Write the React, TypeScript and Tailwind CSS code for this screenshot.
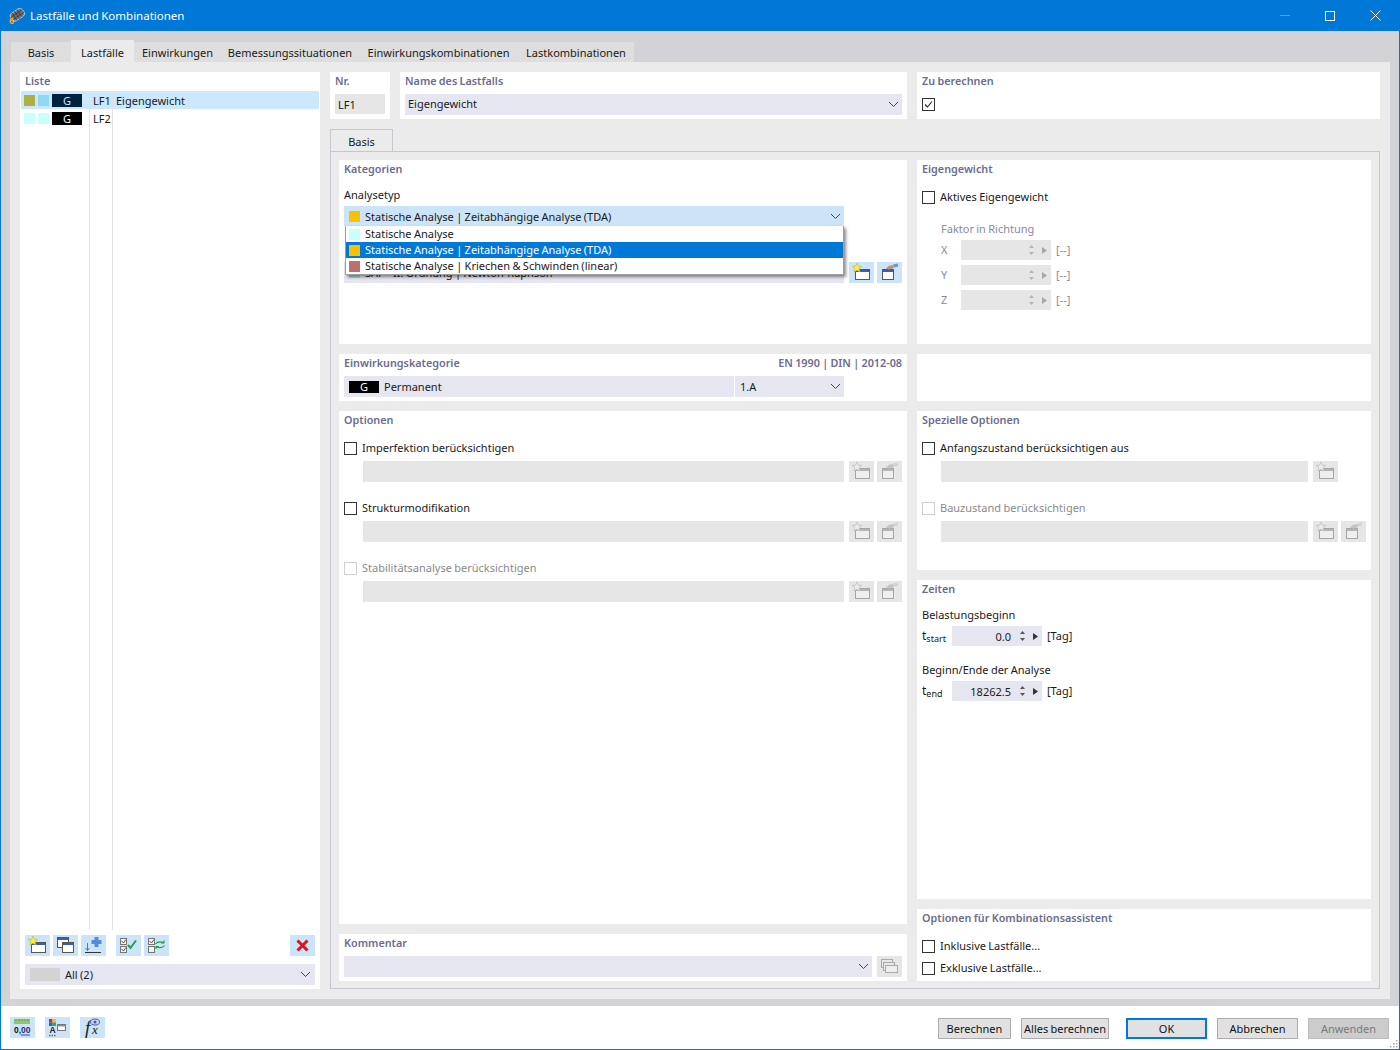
import React from "react";

const ChevronDown = ({ gray = false }: { gray?: boolean }) => (
  <svg width="11" height="7" viewBox="0 0 11 7" className="shrink-0">
    <path d="M1 1l4.5 4.5L10 1" fill="none" stroke={gray ? "#8a8a8a" : "#444"} strokeWidth="1" />
  </svg>
);

const NewIcon = ({ off = false }: { off?: boolean }) => (
  <svg width="25" height="21" viewBox="0 0 25 21">
    <rect x="6.5" y="7.5" width="14" height="10" fill={off ? "#eee" : "#fff"} stroke={off ? "#a5a5a5" : "#555"} />
    <rect x="7" y="8" width="13" height="2" fill={off ? "#b5b5b5" : "#3b5db5"} />
    <path d="M8 1l1.3 3.2 3.5.2-2.7 2.2.9 3.4L8 8.2 5 10l.9-3.4L3.2 4.4l3.5-.2z" fill={off ? "#ececec" : "#f9f03a"} stroke={off ? "#b5b5b5" : "#c4b22c"} strokeWidth=".6" />
  </svg>
);

const EditIcon = ({ off = false }: { off?: boolean }) => (
  <svg width="25" height="21" viewBox="0 0 25 21">
    <rect x="5.5" y="7.5" width="11" height="10" fill={off ? "#eee" : "#fff"} stroke={off ? "#a5a5a5" : "#555"} />
    <rect x="6" y="8" width="10" height="2" fill={off ? "#b5b5b5" : "#3b5db5"} />
    <path d="M9 6.5l2.5-2.5 4-1 2 1.5-2 2.5-4 .5z" fill={off ? "#c4c4c4" : "#b9967a"} />
    <path d="M16 2.5l5-1v3l-3.500 1z" fill={off ? "#d2d2d2" : "#6f94d2"} />
  </svg>
);

const CopyIcon = () => (
  <svg width="25" height="21" viewBox="0 0 25 21">
    <rect x="4.500" y="2.500" width="11" height="10" fill="#fff" stroke="#555" />
    <rect x="5" y="3" width="10" height="2" fill="#3b5db5" />
    <rect x="9.500" y="7.500" width="11" height="10" fill="#fff" stroke="#555" />
    <rect x="10" y="8" width="10" height="2" fill="#3b5db5" />
  </svg>
);

const ImportIcon = () => (
  <svg width="25" height="21" viewBox="0 0 25 21">
    <path d="M13.500 2h4v3h3v4h-3v3h-4V9h-3V5h3z" fill="#4f8fd8" />
    <path d="M6.500 8v7.500M4.500 13l2 2.500 2-2.500" fill="none" stroke="#4a7cc4" strokeWidth="1" />
    <rect x="4" y="17" width="16" height="1" fill="#333" />
  </svg>
);

const Box = ({ y, on }: { y: number; on: boolean }) => (
  <>
    <rect x="4.500" y={y + 0.5} width="6" height="6" fill="#f1f1f1" stroke="#777" />
    {on && <path d={`M5.500 ${y + 3}l2 2 2.500-3.500`} fill="none" stroke="#444" strokeWidth=".9" />}
  </>
);

const CheckAllIcon = () => (
  <svg width="25" height="21" viewBox="0 0 25 21">
    <Box y={3} on />
    <Box y={11} on />
    <path d="M12 10l2.500 3L20 5.500" fill="none" stroke="#1fa04b" strokeWidth="2" />
  </svg>
);

const SwapIcon = () => (
  <svg width="25" height="21" viewBox="0 0 25 21">
    <Box y={3} on />
    <Box y={11} on={false} />
    <path d="M11.500 9c2-2.500 5-2.500 8-1.500M20 5.500v2.500h-3" fill="none" stroke="#1fa04b" strokeWidth="1.200" />
    <path d="M20.500 10.500c-2 2.500-5 2.500-8 1.500M12 14v-2.500h3" fill="none" stroke="#1fa04b" strokeWidth="1.200" />
  </svg>
);

const RedX = () => (
  <svg width="25" height="21" viewBox="0 0 25 21">
    <path d="M7.500 5.500l10 10M17.500 5.500l-10 10" stroke="#e5121b" strokeWidth="3" />
  </svg>
);

const UnitsIcon = () => (
  <svg width="25" height="21" viewBox="0 0 25 21">
    <rect x="4" y="2" width="16" height="5" fill="#8fc56f" />
    <path d="M6 2v2M9 2v2M12 2v2M15 2v2M18 2v2" stroke="#5d9440" strokeWidth=".8" />
    <text x="4" y="16" fontSize="8.500" fontWeight="700" fontFamily="'Liberation Sans', sans-serif" fill="#111">
      0,<tspan fill="#1d2f7a">00</tspan>
    </text>
    <path d="M11 18h9" stroke="#2b4bb0" />
  </svg>
);

const ColorsIcon = () => (
  <svg width="25" height="21" viewBox="0 0 25 21">
    <rect x="4" y="2" width="3.500" height="3.500" fill="#d8262c" />
    <rect x="7.500" y="2" width="3.500" height="3.500" fill="#f4c21b" />
    <rect x="4" y="5.500" width="3.500" height="3.500" fill="#3557c5" />
    <rect x="7.500" y="5.500" width="3.500" height="3.500" fill="#36a84a" />
    <text x="4.500" y="16" fontSize="8.500" fontWeight="700" fontFamily="'Liberation Sans', sans-serif" fill="#222">A</text>
    <path d="M4 18.500h1.500M6.500 18.500h1.500M9 18.500h1.500" stroke="#666" strokeWidth="1.500" />
    <rect x="12.500" y="7.500" width="8" height="6" fill="#fff" stroke="#777" />
    <rect x="13" y="8" width="7" height="1.500" fill="#8a8fa5" />
  </svg>
);

const FxIcon = () => (
  <svg width="25" height="21" viewBox="0 0 25 21">
    <text x="5" y="17" fontSize="19" fontStyle="italic" fontFamily="'Liberation Serif', serif" fill="#222">f</text>
    <text x="12" y="17" fontSize="13" fontStyle="italic" fontFamily="'Liberation Serif', serif" fill="#222">x</text>
    <ellipse cx="15" cy="5" rx="4.500" ry="3" fill="#c9d4ee" stroke="#4a64a8" />
    <circle cx="15" cy="5" r="1.500" fill="#3d5db0" />
  </svg>
);

const CommentIcon = () => (
  <svg width="25" height="21" viewBox="0 0 25 21">
    <rect x="4.500" y="3.500" width="11" height="8" fill="#e8e8e8" stroke="#aaa" />
    <rect x="6.500" y="6.500" width="11" height="8" fill="#e8e8e8" stroke="#aaa" />
    <rect x="8.500" y="9.500" width="12" height="7" fill="#eee" stroke="#aaa" />
  </svg>
);

const IconBtn = ({ children, off = false }: { children: React.ReactNode; off?: boolean }) => (
  <div className={`h-[21px] w-[25px] shrink-0 ${off ? "bg-[#e6e6e6]" : "bg-[#cce4f7]"}`}>{children}</div>
);

const Title = ({ children }: { children: React.ReactNode }) => (
  <div className="flex h-[16px] items-center justify-between pt-[2px] text-[10.8px] font-semibold text-[#6c6c8c]">{children}</div>
);

const Section = ({ title, right, h, children }: { title: string; right?: string; h: string; children?: React.ReactNode }) => (
  <section className={`${h} flow-root bg-white px-[5px]`}>
    <Title>
      <span>{title}</span>
      {right && <span>{right}</span>}
    </Title>
    {children}
  </section>
);

const Check = ({ label, off = false, on = false }: { label: string; off?: boolean; on?: boolean }) => (
  <div className="flex h-[14px] items-center gap-[5px]">
    <div className={`flex h-[13px] w-[13px] items-center justify-center border bg-white ${off ? "border-[#cfcfcf]" : "border-[#333]"}`}>
      {on && (
        <svg width="11" height="11" viewBox="0 0 11 11">
          <path d="M2 5.500l2.500 2.500L9 2.500" fill="none" stroke="#222" strokeWidth="1.100" />
        </svg>
      )}
    </div>
    {label && <span className={`pb-[2px] ${off ? "text-[#8a8a8a]" : "text-[#1a1a1a]"}`}>{label}</span>}
  </div>
);

const OptionGroup = ({ label, off, barW, btns, mt }: { label: string; off?: boolean; barW: string; btns: number; mt: string }) => (
  <div className={mt}>
    <Check label={label} off={off} />
    <div className="mt-[6px] flex gap-[5px] pl-[19px]">
      <div className={`h-[21px] ${barW} bg-[#e6e6e6]`} />
      <div className="flex gap-[3px]">
        <IconBtn off>
          <NewIcon off />
        </IconBtn>
        {btns > 1 && (
          <IconBtn off>
            <EditIcon off />
          </IconBtn>
        )}
      </div>
    </div>
  </div>
);

const Spin = ({ off = false }: { off?: boolean }) => (
  <div className="flex items-center gap-[7px] pr-[4px]">
    <svg width="7" height="12" viewBox="0 0 7 12">
      <path d="M3.500 1L6 4H1z" fill={off ? "#b5b5b5" : "#555"} />
      <path d="M3.500 11L6 8H1z" fill={off ? "#b5b5b5" : "#555"} />
    </svg>
    <svg width="5" height="7" viewBox="0 0 5 7">
      <path d="M0 0l5 3.500L0 7z" fill={off ? "#a8a8a8" : "#333"} />
    </svg>
  </div>
);

const FactorRow = ({ axis, mt }: { axis: string; mt: string }) => (
  <div className={`${mt} flex h-[20px] items-center pl-[19px] text-[#8a8a9c]`}>
    <span className="w-[20px] pb-[2px]">{axis}</span>
    <div className="flex h-[20px] w-[90px] items-center justify-end bg-[#e6e6e6]">
      <Spin off />
    </div>
    <span className="ml-[5px] pb-[2px]">[--]</span>
  </div>
);

const TimeRow = ({ sub, value }: { sub: string; value: string }) => (
  <div className="flex h-[20px] items-center text-[#1a1a1a]">
    <span className="w-[30px] text-[12px]">
      t<sub className="bottom-[-2px] text-[9px]">{sub}</sub>
    </span>
    <div className="flex h-[20px] w-[90px] items-center justify-end gap-[8px] bg-[#e6e6f0]">
      <span>{value}</span>
      <Spin />
    </div>
    <span className="ml-[5px] pb-[2px]">[Tag]</span>
  </div>
);

const Swatch = ({ c }: { c: string }) => <div className={`h-[11px] w-[11px] ${c}`} />;

const ListRow = ({ a, b, label, gBg, gText, rowBg, name }: { a: string; b: string; label: string; gBg: string; gText: string; rowBg: string; name?: string }) => (
  <div className={`flex h-[18px] items-center text-[#1a1a1a] ${rowBg}`}>
    <div className="flex h-full w-[69px] items-center gap-[3px] border-r border-[#e2e2e2] pl-[3px]">
      <Swatch c={a} />
      <Swatch c={b} />
      <div className={`flex h-[13px] w-[30px] items-center justify-center ${gBg} ${gText}`}>G</div>
    </div>
    <div className="flex h-full w-[23px] items-center border-r border-[#e2e2e2] pl-[3px]">{label}</div>
    <span className="pl-[3px]">{name}</span>
  </div>
);

const TopTab = ({ label, w, active }: { label: string; w: string; active?: boolean }) => (
  <div className={`flex items-center justify-center ${w} ${active ? "h-[22px] bg-[#ebebeb] pt-[2px]" : "h-[20px] bg-[#dedede]"}`}>{label}</div>
);

const FootBtn = ({ label, w, kind }: { label: string; w: string; kind?: "ok" | "off" }) => (
  <div
    className={`flex h-[21px] ${w} items-center justify-center ${
      kind === "ok"
        ? "border-2 border-[#0078d7] bg-[#e1e1e1] text-[#111]"
        : kind === "off"
          ? "border border-[#bdbdbd] bg-[#cccccc] text-[#7a7a7a]"
          : "border border-[#adadad] bg-[#e1e1e1] text-[#111]"
    }`}
  >
    {label}
  </div>
);

const MenuItem = ({ c, label, active }: { c: string; label: string; active?: boolean }) => (
  <div className={`flex h-[16px] items-center gap-[5px] pl-[3px] ${active ? "bg-[#0078d7] text-white" : "text-[#1a1a1a]"}`}>
    <div className={`h-[11px] w-[11px] ${c}`} />
    <span className="pb-[2px]">{label}</span>
  </div>
);

export default function App() {
  return (
    <div
      className="flex h-[1050px] w-[1400px] flex-col overflow-hidden border-x border-b border-[#0078d7] bg-[#d3d2d6] text-[11px] leading-none text-[#1a1a1a] [word-spacing:-0.5px]"
      style={{ fontFamily: "'Noto Sans', 'Open Sans', sans-serif" }}
    >
      <header className="flex h-[31px] shrink-0 items-center bg-[#0078d7] pl-[8px] text-[11.5px] text-white">
        <svg width="16" height="16" viewBox="0 0 16 16">
          <g transform="rotate(-35 8 7)">
            <rect x="1.500" y="2.500" width="14" height="9" rx="3" fill="#6f6f78" stroke="#e4e4e4" strokeWidth=".7" />
            <path d="M5 2.500v9M8 2.500v9M11 2.500v9M1.500 5.500h14M1.500 8.500h14" stroke="#2e2e35" strokeWidth=".6" />
          </g>
          <text x="0" y="15.500" fontSize="9" fontWeight="700" fontFamily="'Liberation Sans', sans-serif" fill="#f2b01e">6</text>
        </svg>
        <span className="ml-[5px]">Lastfälle und Kombinationen</span>
        <div className="ml-auto flex items-center">
          <div className="mr-[35px] h-px w-[10px] bg-[#4d9fe3]" />
          <div className="mr-[35px] h-[10px] w-[10px] border border-white" />
          <svg width="11" height="11" viewBox="0 0 11 11" className="mr-[18px]">
            <path d="M.5.5l10 10M10.500.5l-10 10" stroke="#fff" />
          </svg>
        </div>
      </header>

      <main className="flex flex-1 flex-col px-[9px] pt-[9px]">
        <div className="flex h-[22px] items-end pl-px text-[#1a1a1a]">
          <TopTab label="Basis" w="w-[60px]" />
          <TopTab label="Lastfälle" w="w-[63px]" active />
          <TopTab label="Einwirkungen" w="w-[87px]" />
          <TopTab label="Bemessungssituationen" w="w-[138px]" />
          <TopTab label="Einwirkungskombinationen" w="w-[159px]" />
          <TopTab label="Lastkombinationen" w="w-[116px]" />
        </div>

        <div className="flex h-[937px] gap-[10px] bg-[#ebebeb] p-[10px]">
          <aside className="flex w-[300px] flex-col bg-white">
            <div className="mb-[2px] flex h-[17px] items-center px-[5px] font-semibold text-[#6c6c8c]">Liste</div>
            <div className="flex flex-1 flex-col px-px">
              <ListRow a="bg-[#aeb03f]" b="bg-[#93d7f7]" gBg="bg-[#00233f]" gText="text-[#cfe6f7]" label="LF1" name="Eigengewicht" rowBg="bg-[#cce8ff]" />
              <ListRow a="bg-[#c8ffff]" b="bg-[#c8ffff]" gBg="bg-black" gText="text-white" label="LF2" rowBg="" />
              <div className="flex flex-1">
                <div className="w-[69px] border-r border-[#e2e2e2]" />
                <div className="w-[23px] border-r border-[#e2e2e2]" />
              </div>
            </div>
            <div className="flex gap-[3px] px-[5px] pt-[5px]">
              <IconBtn><NewIcon /></IconBtn>
              <IconBtn><CopyIcon /></IconBtn>
              <IconBtn><ImportIcon /></IconBtn>
              <div className="w-[4px]" />
              <IconBtn><CheckAllIcon /></IconBtn>
              <IconBtn><SwapIcon /></IconBtn>
              <div className="ml-auto">
                <IconBtn><RedX /></IconBtn>
              </div>
            </div>
            <div className="mx-[5px] mb-[4px] mt-[8px] flex h-[21px] items-center bg-[#e6e6f0] pl-[5px] pr-[4px]">
              <div className="h-[13px] w-[30px] bg-[#d3d3d3]" />
              <span className="ml-[5px]">All (2)</span>
              <div className="ml-auto"><ChevronDown /></div>
            </div>
          </aside>

          <div className="flex w-[1050px] flex-col">
            <div className="flex h-[47px] gap-[10px]">
              <div className="w-[60px] bg-white px-[5px]">
                <Title><span>Nr.</span></Title>
                <div className="mt-[6px] flex h-[20px] w-[50px] items-center bg-[#e6e6e6] pl-[3px]">LF1</div>
              </div>
              <div className="w-[507px] bg-white px-[5px]">
                <Title><span>Name des Lastfalls</span></Title>
                <div className="mt-[6px] flex h-[21px] items-center justify-between bg-[#e6e6f0] pl-[3px] pr-[3px]">
                  <span className="pb-[2px]">Eigengewicht</span>
                  <ChevronDown />
                </div>
              </div>
              <div className="flex-1 bg-white px-[5px]">
                <Title><span>Zu berechnen</span></Title>
                <div className="mt-[9px]"><Check label="" on /></div>
              </div>
            </div>

            <div className="mt-[10px] flex h-[23px] w-[63px] items-center justify-center border-x border-t border-[#c6c6d0] bg-[#ebebeb]">Basis</div>
            <div className="-mt-px flex h-[838px] gap-[10px] border border-[#c6c6d0] px-[8px] pb-[7px] pt-[8px]">
              <div className="flex w-[568px] flex-col gap-[10px]">
                <Section title="Kategorien" h="h-[184px]">
                  <div className="relative pt-[11px]">
                    <div className="flex h-[14px] items-center">Analysetyp</div>
                    <div className="mt-[5px] flex h-[20px] w-[500px] items-center gap-[5px] bg-[#cce4f7] pl-[5px] pr-[3px]">
                      <div className="h-[11px] w-[11px] bg-[#f8c200]" />
                      <span>Statische Analyse | Zeitabhängige Analyse (TDA)</span>
                      <div className="ml-auto"><ChevronDown /></div>
                    </div>
                    <div className="mt-[36px] flex gap-[5px]">
                      <div className="flex h-[21px] w-[500px] items-center gap-[5px] bg-[#e6e6f0] pl-[5px]">
                        <div className="h-[11px] w-[11px] bg-[#9fe0c8]" />
                        <span>SAP - II. Ordnung | Newton-Raphson</span>
                      </div>
                      <div className="flex gap-[3px]">
                        <IconBtn><NewIcon /></IconBtn>
                        <IconBtn><EditIcon /></IconBtn>
                      </div>
                    </div>
                    <div className="absolute left-px top-[50px] w-[499px] border-x border-b border-[#a0a0a0] bg-white shadow-[2px_2px_3px_rgba(0,0,0,0.45)]">
                      <MenuItem c="bg-[#c8ffff]" label="Statische Analyse" />
                      <MenuItem c="bg-[#f8c200]" label="Statische Analyse | Zeitabhängige Analyse (TDA)" active />
                      <MenuItem c="bg-[#bb6f6f]" label="Statische Analyse | Kriechen & Schwinden (linear)" />
                    </div>
                  </div>
                </Section>

                <Section title="Einwirkungskategorie" right="EN 1990 | DIN | 2012-08" h="h-[47px]">
                  <div className="mt-[6px] flex h-[21px] w-[500px] items-center bg-[#e6e6f0] pl-[5px] pr-[3px]">
                    <div className="flex h-[12px] w-[30px] items-center justify-center bg-black text-white">G</div>
                    <span className="ml-[5px] w-[350px]">Permanent</span>
                    <div className="h-full border-l border-white" />
                    <span className="ml-[5px]">1.A</span>
                    <div className="ml-auto"><ChevronDown /></div>
                  </div>
                </Section>

                <Section title="Optionen" h="h-[513px]">
                  <OptionGroup label="Imperfektion berücksichtigen" barW="w-[481px]" btns={2} mt="mt-[14px]" />
                  <OptionGroup label="Strukturmodifikation" barW="w-[481px]" btns={2} mt="mt-[19px]" />
                  <OptionGroup label="Stabilitätsanalyse berücksichtigen" off barW="w-[481px]" btns={2} mt="mt-[19px]" />
                </Section>

                <Section title="Kommentar" h="h-[47px]">
                  <div className="mt-[6px] flex gap-[5px]">
                    <div className="flex h-[21px] w-[528px] items-center justify-end bg-[#e6e6f0] pr-[3px]"><ChevronDown /></div>
                    <IconBtn off><CommentIcon /></IconBtn>
                  </div>
                </Section>
              </div>

              <div className="flex w-[454px] flex-col gap-[10px]">
                <Section title="Eigengewicht" h="h-[184px]">
                  <div className="mt-[14px]"><Check label="Aktives Eigengewicht" /></div>
                  <div className="mt-[17px] flex h-[14px] items-center pl-[19px] text-[#8a8a9c]">Faktor in Richtung</div>
                  <FactorRow axis="X" mt="mt-[5px]" />
                  <FactorRow axis="Y" mt="mt-[5px]" />
                  <FactorRow axis="Z" mt="mt-[5px]" />
                </Section>

                <Section title="" h="h-[47px]" />

                <Section title="Spezielle Optionen" h="h-[159px]">
                  <OptionGroup label="Anfangszustand berücksichtigen aus" barW="w-[367px]" btns={1} mt="mt-[14px]" />
                  <OptionGroup label="Bauzustand berücksichtigen" off barW="w-[367px]" btns={2} mt="mt-[19px]" />
                </Section>

                <Section title="Zeiten" h="h-[319px]">
                  <div className="mt-[11px] flex h-[14px] items-center">Belastungsbeginn</div>
                  <div className="mt-[5px]"><TimeRow sub="start" value="0.0" /></div>
                  <div className="mt-[16px] flex h-[14px] items-center">Beginn/Ende der Analyse</div>
                  <div className="mt-[5px]"><TimeRow sub="end" value="18262.5" /></div>
                </Section>

                <Section title="Optionen für Kombinationsassistent" h="h-[72px]">
                  <div className="mt-[14px]"><Check label="Inklusive Lastfälle..." /></div>
                  <div className="mt-[8px]"><Check label="Exklusive Lastfälle..." /></div>
                </Section>
              </div>
            </div>
          </div>
        </div>
      </main>

      <footer className="relative flex h-[43px] shrink-0 items-center bg-white pl-[9px] pr-[10px]">
        <div className="flex gap-[10px]">
          <IconBtn><UnitsIcon /></IconBtn>
          <IconBtn><ColorsIcon /></IconBtn>
          <IconBtn><FxIcon /></IconBtn>
        </div>
        <div className="ml-auto mt-[2px] flex">
          <FootBtn label="Berechnen" w="w-[73px]" />
          <div className="w-[10px]" />
          <FootBtn label="Alles berechnen" w="w-[88px]" />
          <div className="w-[17px]" />
          <FootBtn label="OK" w="w-[81px]" kind="ok" />
          <div className="w-[10px]" />
          <FootBtn label="Abbrechen" w="w-[81px]" />
          <div className="w-[10px]" />
          <FootBtn label="Anwenden" w="w-[81px]" kind="off" />
        </div>
        <svg width="9" height="9" viewBox="0 0 9 9" className="absolute bottom-[1px] right-[1px]">
          <path d="M7 1h1.500v1.500H7zM4 4h1.500v1.500H4zM7 4h1.500v1.500H7zM1 7h1.500v1.500H1zM4 7h1.500v1.500H4zM7 7h1.500v1.500H7z" fill="#aaa" />
        </svg>
      </footer>
    </div>
  );
}
